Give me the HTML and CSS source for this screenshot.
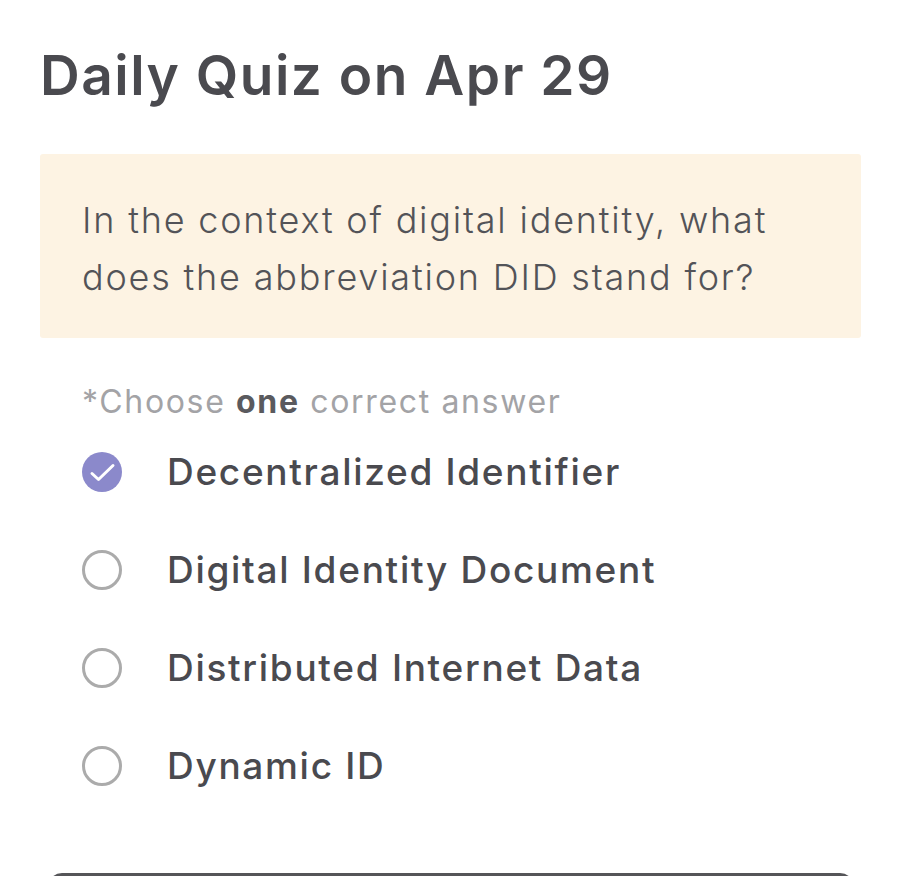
FILE: index.html
```html
<!DOCTYPE html>
<html lang="en">
<head>
<meta charset="utf-8">
<title>Daily Quiz</title>
<link rel="stylesheet" href="styles.css">
</head>
<body>
<main class="page">
  <h1 class="title">Daily Quiz on Apr 29</h1>
  <section class="question">
    <p class="question-text">In the context of digital identity, what does the abbreviation DID stand for?</p>
  </section>
  <p class="hint">*Choose <strong class="hint-strong">one</strong> correct answer</p>
  <ul class="options">
    <li class="option">
      <span class="radio radio-checked">
        <svg class="check" viewBox="0 0 40 40" width="40" height="40" aria-hidden="true">
          <path d="M10 21.5 L16.5 27.5 L31 13.5" fill="none" stroke="#ffffff" stroke-width="3" stroke-linecap="round" stroke-linejoin="round"/>
        </svg>
      </span>
      <span class="option-label">Decentralized Identifier</span>
    </li>
    <li class="option">
      <span class="radio"></span>
      <span class="option-label">Digital Identity Document</span>
    </li>
    <li class="option">
      <span class="radio"></span>
      <span class="option-label">Distributed Internet Data</span>
    </li>
    <li class="option">
      <span class="radio"></span>
      <span class="option-label">Dynamic ID</span>
    </li>
  </ul>
  <div class="submit"></div>
</main>
</body>
</html>
```

FILE: styles.css
```css
html, body {
  margin: 0;
  padding: 0;
  background: #ffffff;
  overflow: hidden;
}

body {
  font-family: Inter, "Noto Sans", "Liberation Sans", sans-serif;
  color: #4b4b50;
}

.page {
  width: 902px;
  height: 876px;
  padding: 0 40px;
  box-sizing: border-box;
  overflow: hidden;
}

.title {
  margin: 43px 0 0 0;
  font-size: 55px;
  line-height: 64px;
  font-weight: 600;
  color: #4a4a4f;
  letter-spacing: 1.5px;
}

.question {
  margin-top: 47px;
  width: 821px;
  box-sizing: border-box;
  background: #fdf3e3;
  border-radius: 3px;
  padding: 38px 42px 32px 42px;
}

.question-text {
  margin: 0;
  font-size: 36px;
  line-height: 57px;
  font-weight: 300;
  color: #535358;
  letter-spacing: 1.8px;
}

.hint {
  margin: 44px 0 0 42px;
  font-size: 32px;
  line-height: 40px;
  color: #a3a3a6;
  letter-spacing: 1.65px;
}

.hint-strong {
  font-weight: 700;
  color: #5a5a5e;
}

.options {
  list-style: none;
  margin: 1px 0 0 0;
  padding: 0 0 0 42px;
  display: flex;
  flex-direction: column;
}

.option {
  display: flex;
  align-items: center;
  height: 98px;
  gap: 45px;
}

.radio {
  flex: none;
  width: 40px;
  height: 40px;
  box-sizing: border-box;
  border-radius: 50%;
  border: 3px solid #ababab;
  display: flex;
}

.radio-checked {
  border: none;
  background: #8b89cb;
}

.option-label {
  font-size: 37px;
  line-height: 48px;
  font-weight: 500;
  color: #4a4a4f;
  letter-spacing: 1.7px;
}

.submit {
  margin: 58px 8px 0 8px;
  height: 80px;
  border: 3px solid #555558;
  border-radius: 14px;
}
```
